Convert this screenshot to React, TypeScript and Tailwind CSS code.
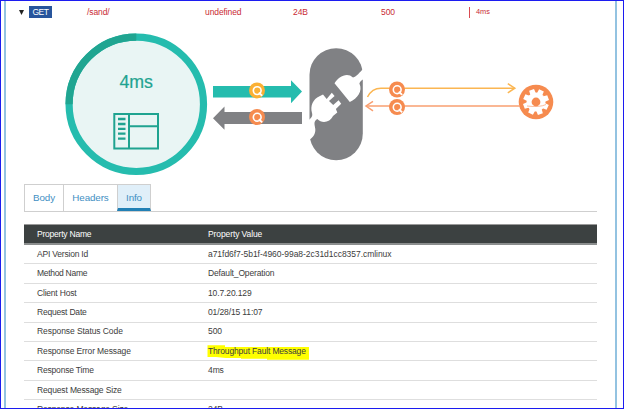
const rows = [
  { name: "API Version Id", value: "a71fd6f7-5b1f-4960-99a8-2c31d1cc8357.cmlinux", nameClass: "tracking-[-0.2px]", valueClass: "tracking-[-0.04px]" },
  { name: "Method Name", value: "Default_Operation", nameClass: "tracking-[-0.3px]", valueClass: "tracking-[-0.16px]" },
  { name: "Client Host", value: "10.7.20.129", nameClass: "tracking-[-0.2px]", valueClass: "tracking-[-0.12px]" },
  { name: "Request Date", value: "01/28/15 11:07", nameClass: "tracking-[-0.2px]", valueClass: "tracking-[-0.12px]" },
  { name: "Response Status Code", value: "500", nameClass: "tracking-[-0.08px]" },
  { name: "Response Error Message", value: "Throughput Fault Message", nameClass: "tracking-[-0.12px]", valueClass: "tracking-[-0.16px]", marked: true },
  { name: "Response Time", value: "4ms", nameClass: "tracking-[-0.18px]" },
  { name: "Request Message Size", value: "", nameClass: "tracking-[-0.14px]" },
  { name: "Response Message Size", value: "24B", nameClass: "tracking-[-0.14px]" },
];

function Magnifier({ x, y, color }: { x: number; y: number; color: string }) {
  return (
    <g transform={`translate(${x} ${y})`}>
      <circle r="8" fill={color} />
      <circle r="3.9" cx="0.2" cy="0.2" fill="none" stroke="#fff" strokeWidth="1.6" />
      <path d="M1.8 2.2 L5.2 5.4" stroke="#fff" strokeWidth="1.9" />
    </g>
  );
}

function Gear() {
  return (
    <g transform="translate(536 102)">
      <circle r="17.3" fill="#f68b4f" />
      <circle r="9.5" fill="#fff" />
      {[25, 70, 115, 160, 205, 250, 295, 340].map((a) => (
        <path key={a} d="M-2.9 -8 L-2.6 -12.9 H2.6 L2.9 -8 Z" fill="#fff" transform={`rotate(${a})`} />
      ))}
      <circle r="4.4" fill="#f68b4f" />
    </g>
  );
}

function FlowDiagram() {
  return (
    <svg className="block h-[160px] w-[591px] shrink-0 tracking-normal" viewBox="6 20 591 160" fontFamily="'Liberation Sans', Arial, sans-serif">
      <circle cx="136.3" cy="104.3" r="67.2" fill="#e9f5f4" stroke="#25bcae" strokeWidth="7.2" />
      <path d="M69.1 104.3 A67.2 67.2 0 0 1 136.3 37.1" fill="none" stroke="#20a591" strokeWidth="7.2" />
      <text x="119.4" y="87.9" fontSize="17.8" fill="#1fa390" stroke="#1fa390" strokeWidth="0.2">4ms</text>
      <g fill="none" stroke="#1fa390" strokeWidth="2">
        <path d="M114.3 114 H158 V148.6 H114.3 Z M129 114 V148.6 M129 126.2 H158" />
        <path d="M118 119 h7.5 M118 124 h7.5 M118 128.8 h7.5 M118 133.7 h7.5 M118 138.6 h7.5" strokeWidth="2.3" />
      </g>
      <path d="M213 86 H291 V80.3 L302 91.6 L291 103.3 V97.4 H213 Z" fill="#25bcae" />
      <path d="M302 112 H224.5 V106.5 L213 118.2 L224.5 129.7 V124 H302 Z" fill="#808184" />
      <Magnifier x={257} y={90.4} color="#fbb034" />
      <Magnifier x={257} y={117} color="#f68b4f" />
      <rect x="309.5" y="48.2" width="53.3" height="112" rx="26.6" fill="#808184" />
      <path d="M334.5 83.3 C338 77 347 71.5 353 77.5 C357 76.5 359 72.5 364 68.2 V78.8 C362 80 360 81.5 359.4 83.5 C363 91 357.5 98.5 349.8 102 Z" fill="#fff" />
      <path d="M319.5 96.3 L323 94.6 L326.7 99 L331.8 92.8 L334.6 95.9 L329 101 L333.2 105 L338.6 100.3 L341.2 103.8 L335.9 109 L337.3 112.6 L333 116 C330 122.5 322 124 317.3 119 C312.8 121.5 315 125.5 315.3 129 C315.6 133.5 313.5 137.3 309 140 V119.8 C311 118.5 313 116 312 113 C310 106 313 99 319.5 96.3 Z" fill="#fff" />
      <g fill="none" stroke="#fbb652" strokeWidth="1.5">
        <path d="M367.5 97 C370 92 374 88.2 381 88.2 H514.5" />
        <path d="M507.8 83.6 L514.8 88.2 L507.8 92.8" />
      </g>
      <Gear />
      <g fill="none" stroke="#f99f70" strokeWidth="1.5">
        <path d="M520 106 H366.5" />
        <path d="M527 106 Q540 107.5 546 104.5" strokeWidth="0.7" />
        <path d="M373 101.3 L366 106 L373 110.8" />
      </g>
      <Magnifier x={397} y={89.5} color="#f68b4f" />
      <Magnifier x={397} y={107} color="#f68b4f" />
    </svg>
  );
}

export default function App() {
  return (
    <div className="h-[409px] w-[624px] overflow-hidden border border-[#1c1cf0] bg-white px-[3px] font-['Liberation_Sans',Arial,sans-serif] text-[8.5px] tracking-[-0.1px] text-[#3c3c3c]">
      <div className="flex h-[420px] w-[613px] flex-col border-x-2 border-[#93c3e1]">
        <div className="flex h-[19px] shrink-0 items-center pt-[3px] text-[#c92b34]">
          <svg className="ml-[13px] h-[5px] w-[5px]" viewBox="0 0 5 5"><path d="M0 0 H5 L2.5 5 Z" fill="#222" /></svg>
          <span className="ml-[5px] flex h-[12px] w-[23px] items-center justify-center bg-[#28559c] pt-px text-[8.5px] tracking-[-0.5px] text-white">GET</span>
          <span className="ml-[35px] w-[118px]">/sand/</span>
          <span className="w-[88px]">undefined</span>
          <span className="w-[88px]">24B</span>
          <span className="w-[88px]">500</span>
          <span className="flex h-[11px] items-center border-l border-[#d94b52] pl-[6px] text-[7.4px] tracking-normal">4ms</span>
        </div>
        <FlowDiagram />
        <div className="ml-[18px] mt-[4px] flex h-[28px] w-[573px] shrink-0 border-b border-[#cfcfcf] text-[9.8px] tracking-[-0.1px] text-[#3f8fc3]">
          <div className="flex w-[39px] items-center justify-center border-l border-t border-[#cfcfcf] pt-px">Body</div>
          <div className="flex w-[54px] items-center justify-center border-l border-t border-[#cfcfcf] pt-px">Headers</div>
          <div className="flex w-[34px] items-center justify-center border-x border-t border-b-[3px] border-[#cfcfcf] border-b-[#2280b5] bg-[#e0eff9] pt-[4px]">Info</div>
        </div>
        <div className="ml-[18px] mt-[12px] w-[573px] shrink-0">
          <div className="flex h-[21px] items-center border-t border-b-2 border-t-[#999] border-b-[#8b8e8e] bg-[#3c4141] pl-[13px] pt-px text-white">
            <span className="w-[171px] tracking-[-0.22px]">Property Name</span>
            <span>Property Value</span>
          </div>
          {rows.map((row) => (
            <div key={row.name} className="flex h-[19.4px] items-center border-b border-[#dedede] pl-[13px]">
              <span className={`w-[171px] ${row.nameClass}`}>{row.name}</span>
              <span className={`relative ${row.valueClass ?? ""}`}>
                {row.marked && (
                  <svg className="absolute -left-px top-0 h-[15px] w-[103px]" viewBox="0 0 103 15">
                    <path d="M0.5 0.3 H18 V2 H102 V14.8 H60 V13.8 H34 V13 H19 L9 12 H0.5 Z" fill="#ff0" />
                  </svg>
                )}
                <span className="relative">{row.value}</span>
              </span>
            </div>
          ))}
        </div>
      </div>
    </div>
  );
}
